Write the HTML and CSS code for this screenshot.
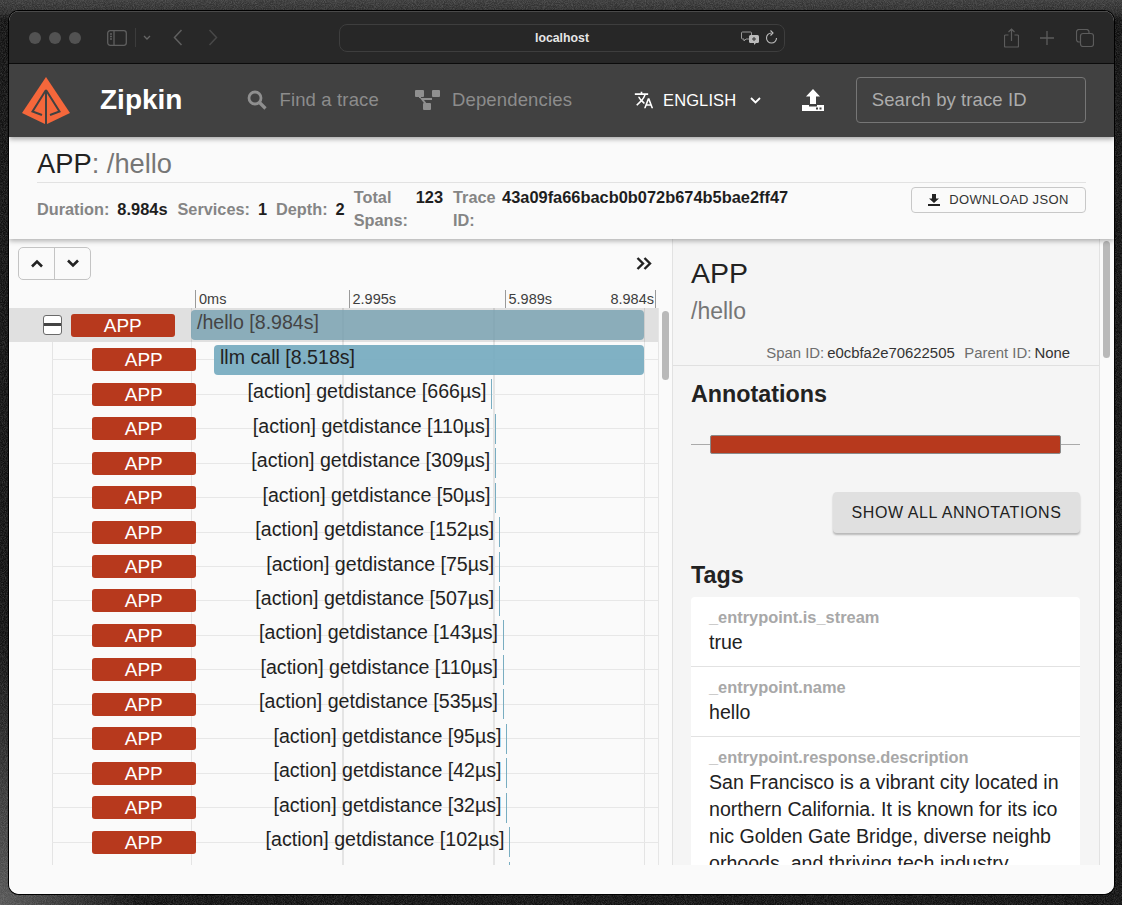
FILE: index.html
```html
<!DOCTYPE html>
<html lang="en">
<head>
<meta charset="utf-8">
<title>Zipkin</title>
<link rel="stylesheet" href="styles.css">
</head>
<body>
<svg class="noise" width="1122" height="905" aria-hidden="true"><filter id="grain"><feTurbulence type="fractalNoise" baseFrequency="1.1" numOctaves="2" seed="4"/><feColorMatrix type="matrix" values="0 0 0 0 1  0 0 0 0 1  0 0 0 0 1  1.4 0 0 0 -0.45"/></filter><rect width="1122" height="905" filter="url(#grain)"/></svg>
<div class="window">
  <div class="titlebar">
    <div class="lights"><span class="light"></span><span class="light"></span><span class="light"></span></div>
    <svg class="ic-sidebar" width="20" height="16" viewBox="0 0 20 16" fill="none" stroke="#5f5f5f" stroke-width="1.3"><rect x=".7" y=".7" width="18.6" height="14.6" rx="2.5"/><path d="M7 1v14M3 4h2M3 6.5h2M3 9h2"/></svg>
    <span class="tb-sep"></span>
    <svg class="ic-drop" width="8" height="5" viewBox="0 0 8 5" fill="none" stroke="#666" stroke-width="1.3"><path d="M1 1l3 3 3-3"/></svg>
    <svg class="ic-back" width="10" height="17" viewBox="0 0 10 17" fill="none" stroke="#5f5f5f" stroke-width="1.5"><path d="M8.5 1L1.5 8.500 8.500 16"/></svg>
    <svg class="ic-fwd" width="10" height="17" viewBox="0 0 10 17" fill="none" stroke="#484848" stroke-width="1.500"><path d="M1.500 1L8.500 8.500 1.500 16"/></svg>
    <div class="urlbar">
      <span class="url">localhost</span>
      <svg class="ic-trans" width="18" height="14" viewBox="0 0 18 14"><path d="M1.500 1h8a1 1 0 0 1 1 1v5a1 1 0 0 1-1 1H5L3 10V8H1.500a1 1 0 0 1-1-1V2a1 1 0 0 1 1-1z" fill="none" stroke="#999"/><rect x="8" y="4" width="10" height="8" rx="1.500" fill="#bbb"/><path d="M11 8h4M13 6v4" stroke="#333"/><path d="M13 12v2l2-2z" fill="#bbb"/></svg>
      <svg class="ic-reload" width="13" height="15" viewBox="0 0 13 15" fill="none" stroke="#bdbdbd" stroke-width="1.100"><path d="M6.500 3a5 5 0 1 0 5 5"/><path d="M5.500 .5L8 3 5.500 5.500"/></svg>
    </div>
    <svg class="ic-share" width="15" height="20" viewBox="0 0 15 20" fill="none" stroke="#5c5c5c" stroke-width="1.200"><path d="M4.500 7H1.500a1 1 0 0 0-1 1v10a1 1 0 0 0 1 1h12a1 1 0 0 0 1-1V8a1 1 0 0 0-1-1h-3M7.500 13V1M4.500 4l3-3 3 3"/></svg>
    <svg class="ic-plus" width="14" height="14" viewBox="0 0 14 14" stroke="#5c5c5c" stroke-width="1.300"><path d="M7 0v14M0 7h14"/></svg>
    <svg class="ic-tabs" width="18" height="18" viewBox="0 0 18 18" fill="none" stroke="#5c5c5c" stroke-width="1.200"><rect x="4.500" y="4.500" width="13" height="13" rx="2.500"/><path d="M4.500 13H3a2.500 2.500 0 0 1-2.500-2.500V3A2.500 2.500 0 0 1 3 .5h7.500A2.500 2.500 0 0 1 13 3v1.500"/></svg>
  </div>

  <header class="nav">
    <svg class="logo" width="48" height="48" viewBox="0 0 48 48"><path d="M24 0L48 36 24 47.500 0 36z" fill="#f5673b"/><path d="M24 13V48M24 13L10.500 34.500l9.500 3.500M24 13l13.500 21.500-9.500 3.500" fill="none" stroke="#414141" stroke-width="2"/></svg>
    <span class="brand">Zipkin</span>
    <a class="nav-link first">
      <svg width="20" height="20" viewBox="0 0 20 20" fill="none" stroke="#8f8f8f"><circle cx="8" cy="8" r="6" stroke-width="2.800"/><path d="M12.500 12.500L18.500 18.500" stroke-width="3.200"/></svg>
      <span>Find a trace</span>
    </a>
    <a class="nav-link second">
      <svg width="25" height="21" viewBox="0 0 25 21" fill="#8f8f8f"><rect y="0" width="9" height="7" rx="1"/><rect x="17" y="0" width="8" height="7" rx="1"/><rect x="8" y="13" width="8" height="7" rx="1"/><path d="M4 6h2v2h11v2H9l3 4-1.600 1L5 8H4z"/></svg>
      <span>Dependencies</span>
    </a>
    <div class="lang">
      <svg width="20" height="20" viewBox="0 0 24 24" fill="#fff"><path d="M12.870 15.070l-2.540-2.510.03-.03c1.740-1.940 2.980-4.170 3.710-6.530H17V4h-7V2H8v2H1v1.990h11.170C11.500 7.920 10.440 9.750 9 11.350 8.070 10.320 7.300 9.190 6.690 8h-2c.73 1.630 1.730 3.170 2.980 4.560l-5.090 5.020L4 19l5-5 3.110 3.110.76-2.040zM18.500 10h-2L12 22h2l1.120-3h4.750L21 22h2l-4.500-12zm-2.620 7l1.620-4.330L19.120 17h-3.240z"/></svg>
      <span>ENGLISH</span>
      <svg class="lang-caret" width="11" height="7" viewBox="0 0 11 7" fill="none" stroke="#fff" stroke-width="1.800"><path d="M1 1l4.500 4.500L10 1"/></svg>
    </div>
    <svg class="upload" width="22" height="22" viewBox="0 0 22 22" fill="#fff"><path d="M11 0l7 7.500h-4V15H8V7.500H4z"/><path d="M0 16h7v1.500h8V16h7v6H0z"/><rect x="14" y="18.500" width="2" height="2" fill="#414141"/><rect x="17.500" y="18.500" width="2" height="2" fill="#414141"/></svg>
    <div class="trace-search">Search by trace ID</div>
  </header>

  <section class="sub">
    <h1 class="title"><span class="svc">APP</span>: /hello</h1>
    <div class="meta-row">
      <div class="meta">
        <span class="m-l">Duration:</span><b class="m-v gap-a">8.984s</b>
        <span class="m-l">Services:</span><b class="m-v gap-b">1</b>
        <span class="m-l">Depth:</span><b class="m-v gap-c">2</b>
        <span class="m-l wrap-a">Total Spans:</span><b class="m-v top gap-d">123</b>
        <span class="m-l wrap-b">Trace ID:</span><b class="m-v top">43a09fa66bacb0b072b674b5bae2ff47</b>
      </div>
      <button class="dl">
        <svg width="12" height="12" viewBox="0 0 12 12" fill="#222"><path d="M4 0h4v4.500h3L6 9 1 4.500h3z"/><path d="M0 10h12v2H0z"/></svg>
        DOWNLOAD JSON
      </button>
    </div>
  </section>

  <main class="main">
    <section class="left">
      <div class="toolbar">
        <div class="btn-group">
          <button class="arrow"><svg width="14" height="9" viewBox="0 0 14 9" fill="none" stroke="#222" stroke-width="2.600"><path d="M2 7.500l5-5 5 5"/></svg></button>
          <button class="arrow"><svg width="14" height="9" viewBox="0 0 14 9" fill="none" stroke="#222" stroke-width="2.600"><path d="M2 1.500l5 5 5-5"/></svg></button>
        </div>
        <svg class="expand" width="16" height="13" viewBox="0 0 16 13" fill="none" stroke="#222" stroke-width="2.400"><path d="M1.500 1l5.500 5.500L1.500 12M8.500 1L14 6.500 8.500 12"/></svg>
      </div>
      <div class="ticks">
        <span class="tick">0ms</span><span class="tick">2.995s</span><span class="tick">5.989s</span><span class="tick last">8.984s</span>
      </div>
      <div class="body">
        <div class="rows">
          <div class="grid"><i class="g tree"></i><i class="g g1"></i><i class="g g2"></i><i class="g g3"></i><i class="g g4"></i></div>
          <div class="row root">
            <span class="toggle"></span><span class="badge">APP</span>
            <div class="bar root-bar">/hello [8.984s]</div>
          </div>
          <div class="row">
            <span class="badge">APP</span>
            <div class="bar llm-bar">llm call [8.518s]</div>
          </div>
          <div class="row"><span class="badge">APP</span><span class="label" style="width:295.500px">[action] getdistance [666µs]</span><i class="tiny"></i></div>
          <div class="row"><span class="badge">APP</span><span class="label" style="width:299.300px">[action] getdistance [110µs]</span><i class="tiny"></i></div>
          <div class="row"><span class="badge">APP</span><span class="label" style="width:299.300px">[action] getdistance [309µs]</span><i class="tiny"></i></div>
          <div class="row"><span class="badge">APP</span><span class="label" style="width:299.500px">[action] getdistance [50µs]</span><i class="tiny"></i></div>
          <div class="row"><span class="badge">APP</span><span class="label" style="width:303.300px">[action] getdistance [152µs]</span><i class="tiny"></i></div>
          <div class="row"><span class="badge">APP</span><span class="label" style="width:303.300px">[action] getdistance [75µs]</span><i class="tiny"></i></div>
          <div class="row"><span class="badge">APP</span><span class="label" style="width:303.300px">[action] getdistance [507µs]</span><i class="tiny"></i></div>
          <div class="row"><span class="badge">APP</span><span class="label" style="width:307px">[action] getdistance [143µs]</span><i class="tiny"></i></div>
          <div class="row"><span class="badge">APP</span><span class="label" style="width:307px">[action] getdistance [110µs]</span><i class="tiny"></i></div>
          <div class="row"><span class="badge">APP</span><span class="label" style="width:307px">[action] getdistance [535µs]</span><i class="tiny"></i></div>
          <div class="row"><span class="badge">APP</span><span class="label" style="width:310.500px">[action] getdistance [95µs]</span><i class="tiny"></i></div>
          <div class="row"><span class="badge">APP</span><span class="label" style="width:310.500px">[action] getdistance [42µs]</span><i class="tiny"></i></div>
          <div class="row"><span class="badge">APP</span><span class="label" style="width:310.500px">[action] getdistance [32µs]</span><i class="tiny"></i></div>
          <div class="row"><span class="badge">APP</span><span class="label" style="width:313.500px">[action] getdistance [102µs]</span><i class="tiny"></i></div>
          <div class="row"><span class="badge"></span><span class="label" style="width:313.500px"></span><i class="tiny"></i></div>
        </div>
        <div class="left-scroll"><span class="thumb"></span></div>
      </div>
    </section>

    <section class="right">
      <div class="right-inner">
        <div class="detail-head">
          <h2 class="d-svc">APP</h2>
          <div class="d-name">/hello</div>
          <div class="ids">
            <span class="id-l">Span ID:</span><span class="id-v sp">e0cbfa2e70622505</span>
            <span class="id-l">Parent ID:</span><span class="id-v">None</span>
          </div>
        </div>
        <div class="detail-body">
          <h3 class="sec">Annotations</h3>
          <div class="ann"><span class="ann-bar"></span></div>
          <div class="ann-action"><button class="show">SHOW ALL ANNOTATIONS</button></div>
          <h3 class="sec tags">Tags</h3>
          <div class="card">
            <div class="tag"><div class="t-k">_entrypoint.is_stream</div><div class="t-v">true</div></div>
            <div class="tag"><div class="t-k">_entrypoint.name</div><div class="t-v">hello</div></div>
            <div class="tag"><div class="t-k">_entrypoint.response.description</div><div class="t-v">San Francisco is a vibrant city located in northern California. It is known for its iconic Golden Gate Bridge, diverse neighborhoods, and thriving tech industry.</div></div>
          </div>
        </div>
      </div>
      <div class="right-scroll"><span class="thumb"></span></div>
    </section>
  </main>
  <div class="foot"></div>
</div>
</body>
</html>
```

FILE: styles.css
```css
* { box-sizing: border-box; }
html, body { margin: 0; height: 100%; }
body {
  width: 1122px;
  height: 905px;
  overflow: hidden;
  padding: 11px 8px 11px 9px;
  position: relative;
  font-family: "Liberation Sans", Arial, sans-serif;
  background:
    linear-gradient(180deg, #3a3a3a 0, #2a2a2a 12px, transparent 20px),
    radial-gradient(140px 260px at 0 905px, #555, transparent),
    #101010;
}
.noise { position: absolute; left: 0; top: 0; opacity: .22; }
.window {
  position: relative;
  width: 1105px;
  height: 883px;
  border-radius: 10px;
  overflow: hidden;
  display: flex;
  flex-direction: column;
  background: #fafafa;
  box-shadow: 0 0 0 1px #000;
}

/* browser chrome */
.titlebar {
  height: 53px;
  flex: none;
  display: flex;
  align-items: center;
  background: #282828;
  border-bottom: 1px solid #0c0c0c;
  border-top: 1px solid #4a4a4a;
  padding-left: 20px;
}
.lights { display: flex; gap: 8px; }
.light { width: 12px; height: 12px; border-radius: 50%; background: #525252; }
.ic-sidebar { margin-left: 26px; }
.tb-sep { width: 1px; height: 19px; background: #3c3c3c; margin-left: 8px; }
.ic-drop { margin-left: 7px; }
.ic-back { margin-left: 22px; }
.ic-fwd { margin-left: 25px; }
.urlbar {
  margin-left: 121px;
  width: 446px;
  height: 28px;
  border: 1px solid #3e3e3e;
  border-radius: 8px;
  background: #272727;
  display: flex;
  align-items: center;
  position: relative;
}
.url { position: absolute; left: 0; right: 0; text-align: center; color: #e6e6e6; font-size: 12.300px; font-weight: 700; }
.ic-trans { margin-left: auto; }
.ic-reload { margin-left: 6px; margin-right: 6px; }
.ic-share { margin-left: 219px; }
.ic-plus { margin-left: 21px; }
.ic-tabs { margin-left: 22px; }

/* zipkin nav */
.nav {
  height: 73px;
  flex: none;
  background: #414141;
  display: flex;
  align-items: center;
  padding-left: 13px;
  padding-bottom: 1px;
  position: relative;
  z-index: 3;
  box-shadow: 0 2px 5px rgba(0,0,0,.35);
}
.logo { flex: none; margin-top: 1px; }
.brand { margin-left: 30px; color: #fff; font-size: 28px; font-weight: 700; }
.nav-link { display: flex; align-items: center; color: #8c8c8c; font-size: 18.500px; letter-spacing: .15px; }
.nav-link.first { margin-left: 65px; gap: 12px; }
.nav-link.second { margin-left: 36px; gap: 12px; }
.lang { margin-left: 62px; display: flex; align-items: center; color: #fff; font-size: 16.500px; letter-spacing: .1px; gap: 9px; }
.lang-caret { margin-left: 5px; }
.upload { margin-left: 41px; margin-top: -1px; }
.trace-search {
  margin-left: 31.500px;
  width: 230px;
  height: 46px;
  border: 1px solid #767676;
  border-radius: 4px;
  display: flex;
  align-items: center;
  padding-left: 15px;
  color: #acacac;
  font-size: 18.500px;
  letter-spacing: .1px;
}

/* trace header */
.sub {
  height: 102px;
  flex: none;
  background: #fafafa;
  padding: 0 28px;
  position: relative;
  z-index: 2;
  box-shadow: 0 2px 5px rgba(0,0,0,.3);
}
.title {
  margin: 0;
  height: 45.500px;
  line-height: 54px;
  font-size: 27.300px;
  font-weight: 400;
  color: #767676;
  border-bottom: 1px solid #e2e2e2;
  white-space: nowrap;
}
.svc { color: #222; }
.meta-row { display: flex; justify-content: space-between; align-items: flex-start; }
.meta { display: flex; align-items: center; padding-top: 4px; font-size: 16.300px; line-height: 23px; font-weight: 700; }
.m-l { color: #858585; }
.m-v { color: #1e1e1e; margin-left: 8px; font-size: 16.400px; }
.m-v.top { align-self: flex-start; margin-top: -1px; }
.gap-a { margin-right: 10px; }
.gap-b { margin-right: 9px; }
.gap-c { margin-right: 9px; }
.gap-d { margin-right: 10px; }
.wrap-a { width: 55px; margin-top: -1px; margin-right: -1px; }
.wrap-b { width: 44px; margin-top: -1px; margin-right: -3px; }
.dl {
  margin-top: 4px;
  width: 175px;
  height: 26px;
  background: #fafafa;
  border: 1px solid #c8c8c8;
  border-radius: 4px;
  display: flex;
  align-items: center;
  justify-content: center;
  gap: 9px;
  font: 400 13px "Liberation Sans", Arial, sans-serif;
  letter-spacing: .35px;
  color: #333;
}

/* main panes */
.main { flex: 1; min-height: 0; display: flex; overflow: hidden; }
.left { width: 664px; flex: none; border-right: 1px solid #e2e2e2; display: flex; flex-direction: column; }
.toolbar { height: 51px; flex: none; display: flex; justify-content: space-between; align-items: center; padding: 0 20px 2px 9px; }
.btn-group { display: flex; width: 73px; height: 33px; border: 1px solid #c4c4c4; border-radius: 5px; }
.arrow { flex: 1; background: none; border: 0; padding: 0; display: flex; align-items: center; justify-content: center; }
.arrow + .arrow { border-left: 1px solid #c4c4c4; }
.ticks { height: 18px; flex: none; margin-left: 186px; width: 461px; display: flex; font-size: 14.500px; line-height: 19px; color: #3e3e3e; }
.tick { flex: none; width: 153.500px; border-left: 1px solid #9a9a9a; padding-left: 3px; }
.tick:nth-child(2) { width: 156px; }
.tick:nth-child(3) { width: 70px; }
.tick.last { flex: 1; width: auto; border-left: 0; border-right: 1px solid #9a9a9a; padding: 0 1px 0 0; text-align: right; }

.body { flex: 1; min-height: 0; display: flex; }
.rows { position: relative; width: 650px; flex: none; overflow: hidden; border-right: 1px solid #e6e6e6; }
.grid { position: absolute; inset: 0; }
.g { position: absolute; top: 0; bottom: 0; width: 1px; background: #e4e4e4; }
.tree { left: 43px; top: 34px; }
.g1 { left: 182px; }
.g2 { left: 333px; width: 1.500px; }
.g3 { left: 484px; width: 1.500px; }
.g4 { left: 635px; }
.row {
  position: relative;
  height: 34.470px;
  display: flex;
  align-items: center;
  padding-left: 83px;
  background: linear-gradient(#e7e7e7, #e7e7e7) 43px 50% / 100% 1px no-repeat;
}
.root { background: rgba(0,0,0,.1); padding-left: 34px; }
.toggle {
  width: 19px;
  height: 20px;
  border: 1.500px solid #6a6a6a;
  border-radius: 3px;
  margin-right: 9px;
  background: linear-gradient(#fff, #fff) ;
  position: relative;
}
.toggle::after { content: ""; position: absolute; left: 0; right: 0; top: 6.500px; height: 3px; background: #444; }
.badge {
  flex: none;
  width: 103.500px;
  height: 23px;
  background: #b7391d;
  border-radius: 3px;
  color: #fff;
  font-size: 19px;
  line-height: 24px;
  text-align: center;
}
.bar {
  height: 30px;
  padding-left: 6px;
  border-radius: 4px;
  font-size: 19.600px;
  line-height: 24px;
  color: #222;
  background: rgba(118,171,192,.93);
}
.root-bar { margin-left: 16.500px; width: 453px; background: rgba(118,160,176,.8); color: #444; }
.llm-bar { margin-left: 18.500px; width: 430px; }
.label {
  flex: none;
  font-size: 19.600px;
  line-height: 24px;
  text-align: right;
  padding-right: 4.500px;
  margin-top: -6px;
  color: #222;
  white-space: nowrap;
}
.tiny { flex: none; width: 1.200px; height: 30px; background: #79adc1; }
.left-scroll { flex: 1; padding: 3px 3px 0 3px; }
.left-scroll .thumb { display: block; width: 7px; height: 69px; }
.thumb { background: #b9b9b9; border-radius: 4px; }

.right { flex: 1; display: flex; min-width: 0; }
.right-inner { width: 427px; flex: none; background: #f5f5f5; border-right: 1px solid #e2e2e2; }
.right-scroll { flex: 1; padding: 2px 3px 0 3px; }
.right-scroll .thumb { display: block; width: 7px; height: 117px; }
.detail-head { height: 127px; padding: 17px 18px 0; border-bottom: 1px solid #e0e0e0; position: relative; }
.d-svc { margin: 0; font-size: 28.500px; line-height: 35px; font-weight: 400; color: #222; }
.d-name { margin-top: 2px; font-size: 23px; line-height: 36px; color: #767676; }
.ids { position: absolute; right: 29px; bottom: 3px; font-size: 14.900px; line-height: 18px; white-space: nowrap; }
.id-l { color: #6e6e6e; margin-right: 3px; }
.id-v { color: #333; }
.id-v.sp { margin-right: 5.500px; }
.detail-body { padding: 0 19px 0 18px; }
.sec { margin: 0; font-size: 23.300px; line-height: 30px; font-weight: 700; color: #222; }
.detail-body > .sec:first-child { margin-top: 13px; }
.ann { margin-top: 26px; height: 19px; position: relative; background: linear-gradient(#aaa, #aaa) 0 50% / 100% 1px no-repeat; }
.ann-bar { position: absolute; left: 19px; right: 19px; top: 0; bottom: 0; background: #b7391d; border: 1px solid #8a8a8a; border-radius: 2px; }
.ann-action { margin-top: 38px; display: flex; justify-content: flex-end; }
.show {
  width: 247px;
  height: 41px;
  border: 0;
  border-radius: 4px;
  background: #e0e0e0;
  box-shadow: 0 2px 2px rgba(0,0,0,.25);
  font: 400 16px "Liberation Sans", Arial, sans-serif;
  letter-spacing: .6px;
  color: #222;
}
.tags { margin-top: 27px; }
.card { margin-top: 7px; background: #fff; border-radius: 4px; overflow: hidden; height: 400px; }
.tag { padding: 10px 19px 10px 18px; border-bottom: 1px solid #e2e2e2; }
.t-k { font-size: 16.400px; line-height: 20px; font-weight: 700; color: #a8a8a8; }
.t-v { font-size: 19.600px; line-height: 27px; color: #222; word-break: break-all; margin-top: 2px; }
.foot { height: 29px; flex: none; background: #fafafa; position: relative; }
```
